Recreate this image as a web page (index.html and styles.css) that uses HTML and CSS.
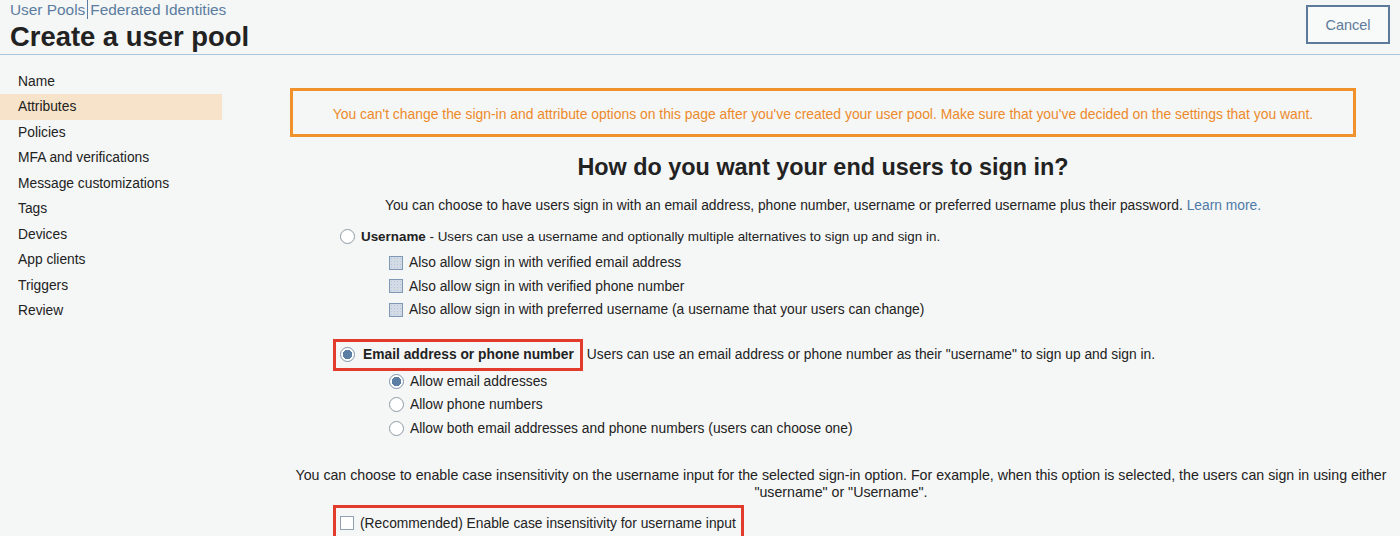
FILE: index.html
```html
<!DOCTYPE html>
<html>
<head>
<meta charset="utf-8">
<link rel="stylesheet" href="styles.css">
</head>
<body>
<header class="topbar">
  <div class="titles">
    <div class="crumbs"><a class="crumb">User Pools</a><span class="sep"></span><a class="crumb">Federated Identities</a></div>
    <h1 class="page-title">Create a user pool</h1>
  </div>
  <button class="cancel">Cancel</button>
</header>
<div class="layout">
  <nav class="sidebar">
    <div class="nav-item">Name</div>
    <div class="nav-item active">Attributes</div>
    <div class="nav-item">Policies</div>
    <div class="nav-item">MFA and verifications</div>
    <div class="nav-item">Message customizations</div>
    <div class="nav-item">Tags</div>
    <div class="nav-item">Devices</div>
    <div class="nav-item">App clients</div>
    <div class="nav-item">Triggers</div>
    <div class="nav-item">Review</div>
  </nav>
  <main class="content">
    <div class="warning">You can't change the sign-in and attribute options on this page after you've created your user pool. Make sure that you've decided on the settings that you want.</div>
    <h2 class="question">How do you want your end users to sign in?</h2>
    <p class="intro">You can choose to have users sign in with an email address, phone number, username or preferred username plus their password. <a class="link">Learn more.</a></p>
    <div class="options">
      <div class="row main-row username-row">
        <span class="radio"></span><span><b>Username</b> - Users can use a username and optionally multiple alternatives to sign up and sign in.</span>
      </div>
      <div class="sub">
        <div class="row sub-row"><span class="check disabled"></span><span>Also allow sign in with verified email address</span></div>
        <div class="row sub-row"><span class="check disabled"></span><span>Also allow sign in with verified phone number</span></div>
        <div class="row sub-row"><span class="check disabled"></span><span>Also allow sign in with preferred username (a username that your users can change)</span></div>
      </div>
      <div class="row main-row email-row">
        <span class="mark"><span class="radio checked"></span><b>Email address or phone number</b></span><span class="after-mark">Users can use an email address or phone number as their "username" to sign up and sign in.</span>
      </div>
      <div class="sub">
        <div class="row sub-row"><span class="radio checked"></span><span>Allow email addresses</span></div>
        <div class="row sub-row"><span class="radio"></span><span>Allow phone numbers</span></div>
        <div class="row sub-row"><span class="radio"></span><span>Allow both email addresses and phone numbers (users can choose one)</span></div>
      </div>
    </div>
    <p class="case-note">You can choose to enable case insensitivity on the username input for the selected sign-in option. For example, when this option is selected, the users can sign in using either "username" or "Username".</p>
    <div class="options">
      <div class="mark mark-bottom"><span class="check"></span><span>(Recommended) Enable case insensitivity for username input</span></div>
    </div>
  </main>
</div>
</body>
</html>
```
FILE: styles.css
```css
* { box-sizing: border-box; }
html, body { margin: 0; padding: 0; }
body {
  background: #f5f6f6;
  font-family: "Liberation Sans", Arial, sans-serif;
  color: #222;
  font-size: 13.8px;
  width: 1400px;
  height: 536px;
  overflow: hidden;
}
.topbar {
  height: 55px;
  border-bottom: 1px solid #a9c7dc;
  display: flex;
  justify-content: space-between;
  align-items: flex-start;
  padding: 0 10px 0 10px;
}
.crumbs {
  display: flex;
  align-items: center;
  font-size: 15.4px;
  line-height: 18px;
  color: #5b7d9f;
}
.crumb { color: #5b7d9f; }
.sep {
  width: 1px;
  height: 19px;
  background: #5b7d9f;
  margin: 0 2px 0 2px;
}
.page-title {
  margin: 2px 0 0 0;
  font-size: 27.4px;
  line-height: 32px;
  font-weight: bold;
  color: #222;
}
.cancel {
  margin-top: 5px;
  width: 84px;
  height: 39px;
  border: 2px solid #5d7b99;
  background: #f8f9f9;
  color: #5d7b99;
  font-family: "Liberation Sans", Arial, sans-serif;
  font-size: 14.5px;
  padding: 0;
}
.layout {
  display: flex;
}
.sidebar {
  width: 222px;
  padding-top: 13.5px;
  flex: none;
}
.nav-item {
  height: 25.5px;
  line-height: 25.5px;
  padding-left: 18px;
  font-size: 13.8px;
  color: #222;
}
.nav-item.active { background: #f6e3c9; }
.content {
  flex: 1;
  margin-left: 68px;
  margin-right: 44px;
  padding-top: 33px;
}
.warning {
  border: 3px solid #f1912c;
  height: 49px;
  display: flex;
  align-items: center;
  justify-content: center;
  color: #ec8a2a;
  font-size: 13.9px;
  padding-top: 3px;
}
.question {
  text-align: center;
  font-size: 23.4px;
  font-weight: bold;
  margin: 15px 0 0 0;
  line-height: 30px;
  color: #222;
}
.intro {
  text-align: center;
  margin: 15px 0 0 0;
  line-height: 18px;
}
.link { color: #4e7aa7; }
.options {
  padding-left: 50px;
}
.row {
  display: flex;
  align-items: center;
}
.main-row { height: 24px; margin-top: 9px; }
.username-row { font-size: 13.4px; }
.sub { padding-left: 49px; }
.sub-row { height: 23.5px; }
.sub-row:first-child { margin-top: 3px; }
.email-row { margin-top: 17px; height: 32px; }
.email-row + .sub .sub-row:first-child { margin-top: -1px; }
.radio {
  display: inline-block;
  width: 15px;
  height: 15px;
  border-radius: 50%;
  border: 1px solid #8d9aa6;
  background: #fff;
  margin-right: 6px;
  flex: none;
}
.radio.checked {
  border-color: #7e95ad;
  background: radial-gradient(circle, #5a7ea4 0 4.5px, #fff 5px);
}
.check {
  display: inline-block;
  width: 14px;
  height: 14px;
  border: 1px solid #8fa1b3;
  background: #fff;
  margin-right: 6px;
  flex: none;
}
.check.disabled {
  border-color: #7f98b3;
  background-color: #d3dce6;
  background-image: radial-gradient(#b7c4d2 0.8px, transparent 1px);
  background-size: 3px 3px;
}
.mark {
  display: inline-flex;
  align-items: center;
  border: 3px solid #e23b2c;
  height: 32px;
  padding-left: 4px;
  padding-right: 6px;
  margin-left: -7px;
}
.mark .radio { margin-right: 8px; }
.after-mark { margin-left: 4px; }
.case-note {
  text-align: center;
  font-size: 14.2px;
  margin: 27px -44px 0 0;
  line-height: 17px;
  padding: 0 8px 0 0;
}
.mark-bottom {
  margin-top: 4px;
  height: 36px;
  padding-bottom: 0;
  padding-right: 0;
  width: 411px;
}
.mark-bottom .check { margin-right: 6px; }
```
